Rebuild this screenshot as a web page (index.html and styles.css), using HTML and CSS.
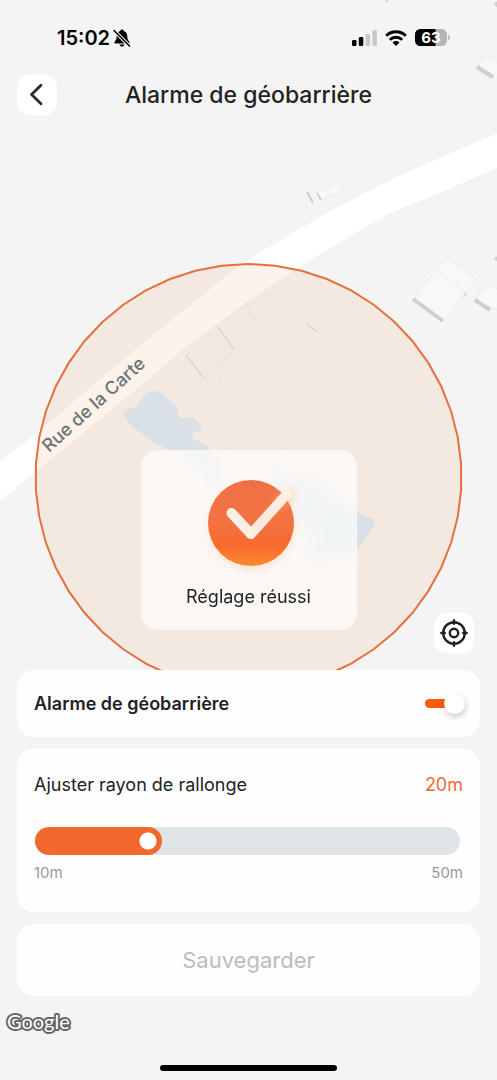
FILE: index.html
```html
<!DOCTYPE html>
<html lang="fr">
<head>
<meta charset="utf-8">
<meta name="viewport" content="width=device-width, initial-scale=1">
<title>Alarme de géobarrière</title>
<link rel="stylesheet" href="styles.css">
</head>
<body>
<main class="screen">
  <svg class="map" viewBox="0 0 497 1080" preserveAspectRatio="xMidYMin slice" role="img" aria-label="Carte">
    <path class="road" d="M-10 467L0 461L37 433L120 362L230 273Q252 256 280 241L323 215L357 197L397 177L430 162L510 128V162L430 197L390 213L347 238L310 260L250 300L220 322L185 347L150 378L100 419L38 470L-10 509Z"/>
    <g class="building">
      <path d="M413 300L447 257L476 280L444 320ZM436 269L465 292M487 283L510 296V315L475 300ZM310 190L316 201M317 193L338 182L343 190L321 200ZM485 56L510 70L505 84L478 66Z"/>
    </g>
    <path class="wall" d="M413 299L443 321M475 300L490 310M477 67L493 77M495 258L500 260M386 0L388 1M495 3L500 7"/>
    <path class="wall-thin" d="M307 192L313 203M317 193L321 200M464 294L466 295"/>
    <polygon class="fence" transform="translate(248.5 477)" points="0,-213 26.7,-211.3 53,-206.3 78.4,-198 102.6,-186.7 125.2,-172.3 145.8,-155.3 164.1,-135.8 179.8,-114.1 192.7,-90.7 202.6,-65.8 209.2,-39.9 212.6,-13.4 212.6,13.4 209.2,39.9 202.6,65.8 192.7,90.7 179.8,114.1 164.1,135.8 145.8,155.3 125.2,172.3 102.6,186.7 78.4,198 53,206.3 26.7,211.3 0,213 -26.7,211.3 -53,206.3 -78.4,198 -102.6,186.7 -125.2,172.3 -145.8,155.3 -164.1,135.8 -179.8,114.1 -192.7,90.7 -202.6,65.8 -209.2,39.9 -212.6,13.4 -212.6,-13.4 -209.2,-39.9 -202.6,-65.8 -192.7,-90.7 -179.8,-114.1 -164.1,-135.8 -145.8,-155.3 -125.2,-172.3 -102.6,-186.7 -78.4,-198 -53,-206.3 -26.7,-211.3"/>
    <path class="water" d="M128 409L137 407L143 397L149 391Q156 389 162 394L173 403Q180 410 178 416Q184 420 189 417Q196 417 198 423Q205 427 199 431Q190 432 193 440Q201 440 208 447L215 462L219 492Q207 485 204 468L188 456L167 449L149 439L133 427L123 415Z"/>
    <path class="water" d="M277 466L284 469L280 482L297 486L303 477L322 484L337 503L358 513L371 518Q375 521 374 526L360 547L342 556L315 559L298 549L317 545L312 529L298 524L295 502L273 485Z"/>
    <path class="building-soft" d="M186 355L209 337L212 332L218 334L234 351L213 366L220 363L226 366L217 372L221 381L213 389ZM204 377L234 353M218 327L247 303L259 329L234 349ZM245 308L268 292L278 304L257 320ZM307 324L323 303L335 310L317 332ZM222 452L248 425L290 451"/>
    <path class="wall-soft" d="M186 355L203 377M218 327L234 349M307 324L317 332"/>
    <text class="street" transform="translate(49 453) rotate(-42)">Rue de la Carte</text>
  </svg>

  <div class="status">
    <div class="status-side">
      <span class="time">15:02</span>
      <svg width="18" height="18" viewBox="0 0 18 18" aria-label="Silencieux">
        <path d="M9 .6c-1 0-1.600.6-1.700 1.300C4.900 2.700 3.800 4.700 3.700 7.200c-.1 3-.6 4-1.900 5.300-.8.800-.5 2 .6 2h13.200c1.100 0 1.400-1.200.6-2-1.300-1.300-1.800-2.300-1.900-5.300-.1-2.500-1.200-4.500-3.600-5.300C10.600 1.200 10 .6 9 .6zM6.500 15.500h5c-.2 1.300-1.200 2.100-2.500 2.100s-2.300-.8-2.500-2.100z"/>
        <path d="M1 1.500l15.500 15.500" stroke="#f4f4f4" stroke-width="3.600"/>
        <path d="M1 1.500l15.500 15.500" stroke="#000" stroke-width="1.500" stroke-linecap="round"/>
      </svg>
    </div>
    <div class="status-side status-icons">
      <svg width="25" height="16" viewBox="0 0 25 16" aria-label="Réseau">
        <rect x="0" y="10" width="4.500" height="6" rx="1.300"/><rect x="6.800" y="7" width="4.500" height="9" rx="1.300"/>
        <g fill="#c8c8c8"><rect x="13.600" y="4" width="4.500" height="12" rx="1.300"/><rect x="20.400" y="0" width="4.500" height="16" rx="1.300"/></g>
      </svg>
      <svg width="22" height="16" viewBox="0 0 22 16" fill="none" stroke="#000" stroke-width="2.900" aria-label="Wi-Fi">
        <path d="M1.200 5.700a14 14 0 0 1 19.600 0M4.800 9.700a9 9 0 0 1 12.400 0"/>
        <path d="M7.500 12.400a5 5 0 0 1 7 0L11 15.900z" fill="#000" stroke="none"/>
      </svg>
      <svg width="36" height="17" viewBox="0 0 36 17" aria-label="Batterie 63 %">
        <rect width="32" height="17" rx="5.500" fill="#b4b4b4"/>
        <path d="M5.500 0H20.500V17H5.500A5.500 5.500 0 0 1 0 11.500V5.500A5.500 5.500 0 0 1 5.500 0z"/>
        <path d="M33.200 5.500c2.200.8 2.200 5.200 0 6z" fill="#b4b4b4"/>
        <text class="battery" x="16" y="14" text-anchor="middle">63</text>
      </svg>
    </div>
  </div>

  <header class="nav">
    <button class="icon-button" type="button" aria-label="Retour">
      <svg width="24" height="24" viewBox="0 0 24 24" fill="none" stroke="#2b2b2b" stroke-width="2.800" stroke-linecap="round" stroke-linejoin="round"><path d="M16 2.300L6.500 11.500l9.500 9.200"/></svg>
    </button>
    <h1>Alarme de géobarrière</h1>
  </header>

  <div class="map-tools">
    <button class="icon-button" type="button" aria-label="Me localiser">
      <svg width="28" height="28" viewBox="0 0 28 28" fill="none" stroke="#222" stroke-width="2.400" stroke-linecap="round"><circle cx="14" cy="14" r="10.800"/><circle cx="14" cy="14" r="4.200"/><path d="M14 1.300v3.500M14 23.200v3.500M1.300 14h3.500M23.200 14h3.500"/></svg>
    </button>
  </div>

  <form class="panel">
    <div class="card card-toggle">
      <label class="label-strong" for="alarm">Alarme de géobarrière</label>
      <input class="switch" id="alarm" type="checkbox" role="switch" checked>
    </div>
    <div class="card card-radius">
      <div class="row">
        <label for="radius">Ajuster rayon de rallonge</label>
        <output class="value" for="radius">20m</output>
      </div>
      <div class="slider-wrap"><input class="slider" id="radius" type="range" min="10" max="50" value="20"></div>
      <div class="row scale"><span>10m</span><span>50m</span></div>
    </div>
    <button class="card save" type="submit" disabled>Sauvegarder</button>
  </form>

  <footer class="footer">
    <svg class="brand" width="74" height="30" viewBox="0 0 74 30" aria-label="Google"><text x="4" y="21">Google</text></svg>
    <div class="home"></div>
  </footer>

  <div class="toast" role="status">
    <svg class="success" width="104" height="104" viewBox="-2 0 104 104" aria-hidden="true">
      <defs>
        <linearGradient id="disc" x1="0" y1="0" x2="0" y2="1"><stop offset="0" stop-color="#ef7045"/><stop offset=".45" stop-color="#f27443"/><stop offset=".75" stop-color="#f96a2f"/><stop offset="1" stop-color="#fb8a30"/></linearGradient>
        <linearGradient id="tick" gradientUnits="userSpaceOnUse" x1="33" y1="63" x2="88" y2="23"><stop offset="0" stop-color="#fff4ea"/><stop offset=".5" stop-color="#fae7dd"/><stop offset="1" stop-color="#fff1e3"/></linearGradient>
        <filter id="glow" filterUnits="userSpaceOnUse" x="-20" y="-20" width="150" height="150"><feGaussianBlur stdDeviation="5"/></filter>
      </defs>
      <circle cx="52" cy="56" r="41" fill="#ffb177" opacity=".4" filter="url(#glow)"/>
      <circle cx="52" cy="52" r="43" fill="url(#disc)"/>
      <g fill="none" stroke-linecap="round" stroke-linejoin="round">
        <path d="M80 32L90 25" stroke="#ffb274" stroke-width="10" opacity=".6" filter="url(#glow)"/>
        <path d="M32.500 42L52 63L88 23" stroke="url(#tick)" stroke-width="10"/>
      </g>
    </svg>
    <p>Réglage réussi</p>
  </div>
</main>
</body>
</html>
```
FILE: styles.css
```css
* { box-sizing: border-box; }

body {
  margin: 0;
  background: #f4f4f4;
  color: #222;
  font-family: Inter, "Liberation Sans", sans-serif;
  font-size: 18px;
}

button, input { margin: 0; font: inherit; }
h1, p { margin: 0; }

.screen {
  position: relative;
  display: flex;
  flex-direction: column;
  min-height: 100vh;
  overflow: hidden;
  isolation: isolate;
}

.map {
  position: absolute;
  inset: 0;
  z-index: -1;
  width: 100%;
  height: 100%;
}

.road { fill: #fff; }
.water { fill: #dae1e6; }
.building { fill: #f8f8f8; stroke: #ececec; stroke-width: 1; }
.building-soft { fill: none; stroke: #ebe1d9; stroke-width: 1; }
.wall, .wall-thin, .wall-soft { fill: none; stroke: #cfcfcf; stroke-width: 4; }
.wall-thin { stroke-width: 2; }
.wall-soft { stroke: #d3c9c2; stroke-width: 1; }
.fence { fill: rgb(240 145 70 / 11%); stroke: #e5703f; stroke-width: 2; }
.street {
  fill: #6b7478;
  font-size: 18px;
  font-weight: 500;
  stroke: #fdf1e8;
  stroke-width: 2px;
  paint-order: stroke;
}

.status {
  display: flex;
  justify-content: space-between;
  align-items: center;
  height: 75px;
  padding: 0 46px 0 57px;
}
.status-side { display: flex; align-items: center; gap: 3px; }
.status-icons { gap: 8px; }
.time { color: #000; font-size: 20px; font-weight: 600; }
.battery { fill: #fff; font-size: 15px; font-weight: 700; }

.nav {
  display: grid;
  grid-template-columns: 40px 1fr 40px;
  align-items: center;
  padding: 0 17px;
}
.nav h1 {
  font-size: 23px;
  font-weight: 500;
  line-height: 28px;
  text-align: center;
  white-space: nowrap;
}

.icon-button {
  display: grid;
  place-items: center;
  width: 40px;
  height: 40px;
  padding: 0;
  border: 0;
  border-radius: 12px;
  background: #fff;
}

.map-tools {
  display: flex;
  flex: 1;
  justify-content: flex-end;
  align-items: flex-end;
  padding: 0 23px 17px;
}

.panel {
  display: flex;
  flex-direction: column;
  gap: 12px;
  padding: 0 17px;
}
.card {
  padding: 0 17px;
  border: 0;
  border-radius: 17px;
  background: #fefefe;
}
.card-toggle {
  display: flex;
  justify-content: space-between;
  align-items: center;
  height: 67px;
  padding-right: 15px;
}
.label-strong { font-weight: 600; }

.switch {
  appearance: none;
  display: flex;
  justify-content: flex-end;
  align-items: center;
  position: relative;
  width: 40px;
  height: 22px;
}
.switch::before {
  content: "";
  position: absolute;
  left: 0;
  width: 30px;
  height: 9px;
  border-radius: 5px;
  background: #f95a08;
}
.switch::after {
  content: "";
  position: relative;
  width: 21px;
  height: 21px;
  border-radius: 50%;
  background: #fff;
  box-shadow: 1px 3px 6px rgb(0 0 0 / 20%);
}

.card-radius { padding-top: 24px; padding-bottom: 27px; }
.row { display: flex; justify-content: space-between; line-height: 24px; }
.value { color: #ed6b37; }
.scale { margin-top: 6px; color: #999; font-size: 15px; }

.slider-wrap { margin-top: 30px; padding: 0 3px 0 1px; }
.slider {
  appearance: none;
  display: block;
  width: 100%;
  height: 28px;
  border-radius: 14px;
  background: linear-gradient(to right, #f1682d calc(25% + 7px), #dee4e8 0);
}
.slider::-webkit-slider-thumb {
  appearance: none;
  width: 28px;
  height: 28px;
  border-radius: 50%;
  background: radial-gradient(circle, #fff 8px, #f1682d 9px);
}
.slider::-moz-range-thumb {
  width: 28px;
  height: 28px;
  border: 0;
  border-radius: 50%;
  background: radial-gradient(circle, #fff 8px, #f1682d 9px);
}

.save {
  height: 72px;
  color: #bcbcbc;
  font-size: 22px;
}

.footer {
  display: flex;
  flex-direction: column;
  justify-content: space-between;
  height: 84px;
  padding: 12px 3px 9px;
}
.brand text {
  fill: #fff;
  stroke: #666;
  stroke-width: 4px;
  stroke-linejoin: round;
  paint-order: stroke;
  font-family: Lato, sans-serif;
  font-size: 20px;
}
.home {
  align-self: center;
  width: 36%;
  height: 6px;
  border-radius: 3px;
  background: #000;
}

.toast {
  position: absolute;
  top: 50%;
  left: 50%;
  display: flex;
  flex-direction: column;
  align-items: center;
  width: 216px;
  height: 180px;
  padding-top: 21px;
  border-radius: 17px;
  background: rgb(255 255 255 / 65%);
  backdrop-filter: blur(7px);
  transform: translate(-50%, -50%);
}
.toast p { margin-top: 10px; line-height: 24px; }
```
